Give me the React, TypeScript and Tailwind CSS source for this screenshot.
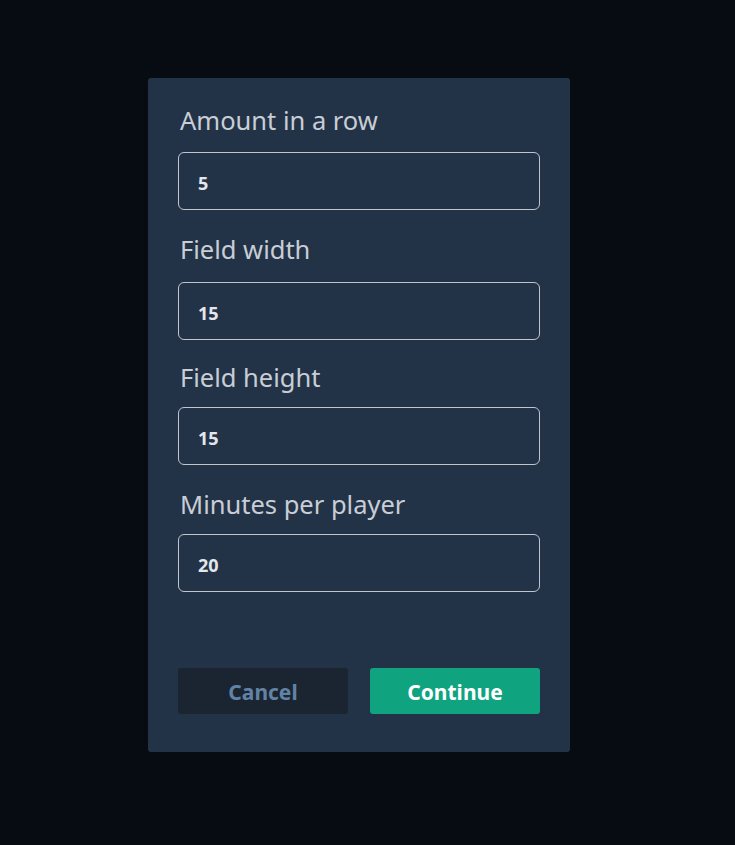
import React, { useState } from "react";

type Field = {
  label: string;
  value: string;
  labelGap: string; // space above the label
  inputGap: string; // space between label and input
};

const fields: Field[] = [
  { label: "Amount in a row", value: "5", labelGap: "mt-0", inputGap: "mt-[20px]" },
  { label: "Field width", value: "15", labelGap: "mt-[27px]", inputGap: "mt-[21px]" },
  { label: "Field height", value: "15", labelGap: "mt-[25px]", inputGap: "mt-[18px]" },
  { label: "Minutes per player", value: "20", labelGap: "mt-[27px]", inputGap: "mt-[18px]" },
];

export default function App() {
  const [values, setValues] = useState(fields.map((f) => f.value));

  return (
    <div
      className="min-h-screen bg-[#070b12] pl-[148px] pt-[78px]"
      style={{ fontFamily: '"Noto Sans", "Open Sans", sans-serif' }}
    >
      <div className="w-[422px] h-[674px] rounded-[3px] bg-[#233347] px-[30px] pt-[30px] pb-[38px] flex flex-col">
        {fields.map((f, i) => (
          <div key={f.label} className={`${f.labelGap} flex flex-col`}>
            <label className="pl-[2px] text-[25.5px] leading-[24px] text-[#c9ced6]">
              {f.label}
            </label>
            <input
              value={values[i]}
              onChange={(e) => {
                const next = [...values];
                next[i] = e.target.value;
                setValues(next);
              }}
              className={`${f.inputGap} h-[58px] w-full rounded-[6px] border-[1.5px] border-[#c0c5cc] bg-transparent px-[19px] pt-[4px] text-[18px] font-bold text-[#e3e7ec] outline-none`}
            />
          </div>
        ))}

        {/* footer buttons */}
        <div className="mt-auto grid grid-cols-2 gap-[22px]">
          <button className="h-[46px] rounded-[3px] bg-[#1b2531] pt-[3px] text-[21px] font-bold text-[#6283a6]">
            Cancel
          </button>
          <button className="h-[46px] rounded-[3px] bg-[#10a37f] pt-[3px] text-[21px] font-bold text-white">
            Continue
          </button>
        </div>
      </div>
    </div>
  );
}
